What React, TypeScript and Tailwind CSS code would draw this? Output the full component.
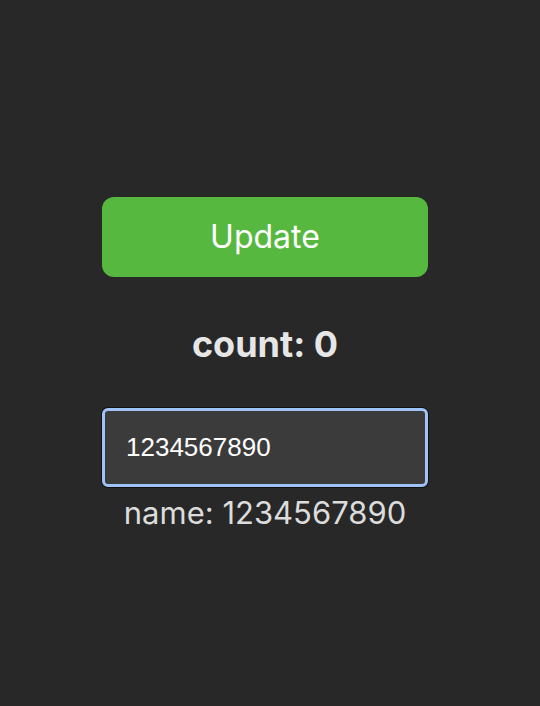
import { useState } from "react";

export default function App() {
  const [count, setCount] = useState(0);
  const [name, setName] = useState("1234567890");

  return (
    <div className="min-h-[706px] w-full bg-[#282828] flex flex-col items-center pt-[197px] pr-[10px] font-['Inter',sans-serif]">
      <button
        onClick={() => setCount(count + 1)}
        className="w-[326px] h-[80px] rounded-[12px] bg-[#56b83e] text-white text-[32px] leading-none"
      >
        Update
      </button>

      <p className="mt-[45px] h-[44px] text-[36px] leading-[44px] font-bold text-[#e6e6e6]">count: {count}</p>

      <input
        value={name}
        onChange={(e) => setName(e.target.value)}
        className="mt-[42px] w-[326px] h-[79px] rounded-[6px] border-[3px] border-[#9fc3f7] shadow-[0_0_0_1px_#111] bg-[#3b3b3b] px-[21px] text-[26px] text-white outline-none font-['Liberation_Sans',sans-serif]"
      />

      <p className="mt-[8px] text-[31px] leading-[36px] text-[#dcdcdc]">name: {name}</p>
    </div>
  );
}
